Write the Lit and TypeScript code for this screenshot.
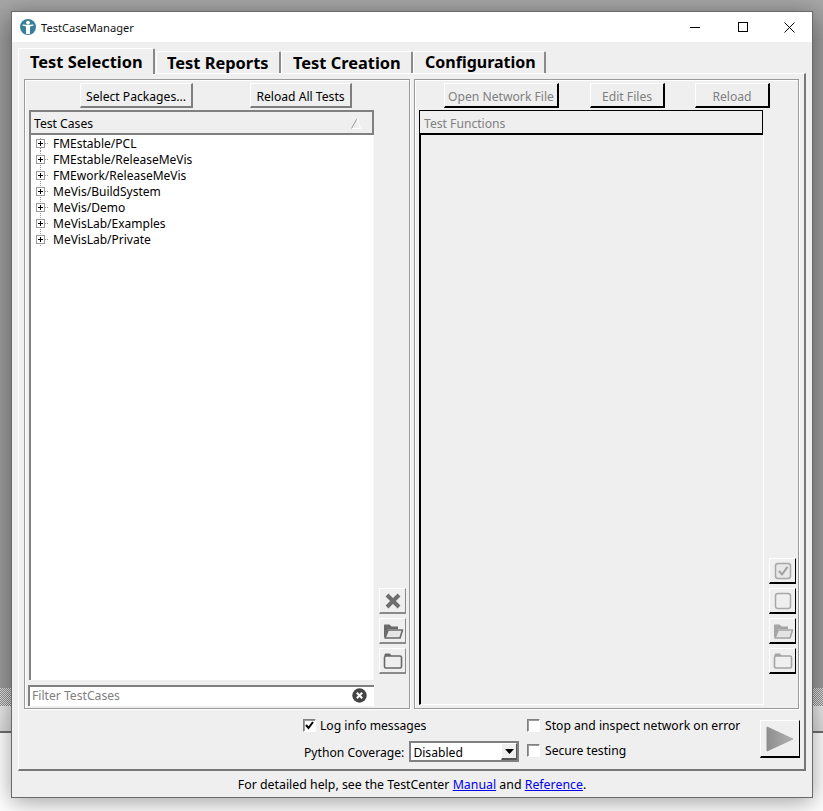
import { LitElement, html, css, svg } from "lit";
import { customElement } from "lit/decorators.js";

const packages = ["FMEstable/PCL","FMEstable/ReleaseMeVis","FMEwork/ReleaseMeVis","MeVis/BuildSystem","MeVis/Demo","MeVisLab/Examples","MeVisLab/Private"];

const folderOpen = (c: string, d: string) => html`<svg width="22" height="18" viewBox="0 0 22 18"><path d="M2 15V3.5C2 3 2.4 2.5 3 2.5H7.5L9.5 4.5H16V7H6L3.5 15Z" fill="${d}"/><path d="M3 16L6.2 8H20.5L18 16Z" fill="${c}" stroke="${d}" stroke-width="1.6" stroke-linejoin="round"/></svg>`;
const folderClosed = (c: string, d: string) => html`<svg width="20" height="18" viewBox="0 0 20 18"><path d="M1.5 4V3C1.5 2 2 1.5 3 1.5H7L8.5 4Z" fill="${d}"/><rect x="1.5" y="4" width="17" height="12" rx="1.5" fill="${c}" stroke="${d}" stroke-width="1.6"/></svg>`;

@customElement("app-root")
export class AppRoot extends LitElement {
  static styles = css`
    :host { display: block; position: relative; width: 823px; height: 811px; overflow: hidden; background: #fff; font-family: "Noto Sans", sans-serif; font-size: 12.15px; color: #000; }
    .desk { display: flex; flex-direction: column; height: 100%; }
    .d-gray { height: 688px; background: linear-gradient(#a6a6a6, #9a9a9a 40px); }
    .d-check { height: 18px; background: repeating-conic-gradient(#8f8f8f 0 25%, #e4e4e4 0 50%) 0 0 / 2px 2px; }
    .d-light { height: 25px; background: linear-gradient(#e9e9e9, #dcdcdc); }
    .d-line { height: 2px; background: #6e6e6e; }
    .window { position: absolute; left: 11px; top: 11px; width: 802px; height: 787px; box-sizing: border-box; border: 1px solid #6a6a6a; background: #efefef; box-shadow: 0 4px 22px rgba(0,0,0,.38); display: flex; flex-direction: column; }
    .title { height: 30px; flex: none; background: #fff; display: flex; align-items: center; padding-left: 8px; }
    .title svg.logo { flex: none; }
    .title .t { margin-left: 5px; font-size: 11.1px; color: #111; }
    .caps { margin-left: auto; display: flex; }
    .caps svg { display: block; width: 46px; height: 30px; }
    .body { flex: 1; padding: 0 6px; display: flex; flex-direction: column; }
    .tabs { height: 31px; flex: none; display: flex; align-items: flex-end; position: relative; z-index: 1; }
    .tab { box-sizing: border-box; height: 22px; border-left: 1px solid #fff; border-top: 1px solid #fff; border-right: 2px solid #8a8a8a; font-weight: 700; font-size: 16.4px; line-height: 21px; padding-left: 10px; border-top-left-radius: 2px; border-top-right-radius: 2px; white-space: nowrap; }
    .tab.sel { height: 26px; margin-bottom: -1px; background: #efefef; padding-left: 11px; line-height: 25px; }
    .tab.cr { padding-left: 11px; }
    .tab.cf { padding-left: 11px; font-size: 16px; }
    .frame { flex: none; box-sizing: border-box; height: 698px; width: 788px; border-top: 1px solid #fff; border-left: 1px solid #fff; border-right: 2px solid #777; border-bottom: 2px solid #777; padding: 5px 5px 0 5px; display: flex; flex-direction: column; }
    .groups { display: flex; gap: 4px; height: 630px; flex: none; }
    .group { box-sizing: border-box; border: 1px solid #9a9a9a; box-shadow: 1px 1px 0 #fff, inset 1px 1px 0 #fff; padding: 3px 0 0 4px; display: flex; flex-direction: column; }
    .group.l { width: 386px; }
    .group.r { width: 385px; }
    .btnrow { display: flex; height: 25px; flex: none; }
    .btn { box-sizing: border-box; height: 25px; padding-top: 2px; display: flex; align-items: center; justify-content: center; border-left: 1px solid #fff; border-top: 1px solid #fff; border-right: 2px solid #7e7e7e; border-bottom: 2px solid #7e7e7e; white-space: nowrap; }
    .off { color: #808080; border-right-color: #000; border-bottom-color: #000; }
    .w113 { width: 113px; margin-left: 51px; }
    .w102 { width: 102px; margin-left: 57px; }
    .w115 { width: 115px; margin-left: 25px; }
    .w75a { width: 75px; margin-left: 31px; }
    .w75b { width: 75px; margin-left: 30px; }
    .main { display: flex; gap: 5px; margin-top: 2px; flex: 1; min-height: 0; }
    .col { width: 345px; flex: none; display: flex; flex-direction: column; }
    .head { box-sizing: border-box; height: 25px; flex: none; display: flex; align-items: center; justify-content: space-between; border: 2px solid #808080; padding: 2px 11px 0 3px; }
    .r .head { border-color: #000; border-top-width: 1px; border-right-width: 1px; border-left-width: 1px; width: 344px; color: #808080; padding-left: 4px; }
    .tree { flex: none; height: 545px; box-sizing: border-box; background: #fff; border-left: 2px solid #808080; border-right: 1px solid #f8f8f8; font-size: 12px; }
    .row { height: 16px; display: flex; align-items: center; white-space: nowrap; }
    .row svg { flex: none; display: block; margin: 0 4px 0 4px; }
    .filter { box-sizing: border-box; margin: 5px 0 0 -1px; height: 21px; width: 346px; background: #fff; border-left: 2px solid #808080; border-top: 2px solid #808080; display: flex; align-items: center; justify-content: space-between; padding: 0 7px 2px 2px; color: #808080; }
    .filter svg { display: block; }
    .tree-r { flex: none; width: 345px; height: 570px; box-sizing: border-box; border-left: 2px solid #000; border-right: 1px solid #fff; border-bottom: 1px solid #fff; }
    .side { width: 27px; flex: none; display: flex; flex-direction: column; justify-content: flex-end; gap: 4px; padding-bottom: 34px; }
    .sbtn { box-sizing: border-box; width: 27px; height: 26px; display: flex; align-items: center; justify-content: center; border-left: 1px solid #fff; border-top: 1px solid #fff; border-right: 1px solid #8a8a8a; border-bottom: 2px solid #8a8a8a; }
    .sbtn.k { border-right-color: #000; border-bottom-color: #000; }
    .sbtn svg { display: block; }
    .bottom { flex: 1; display: grid; grid-template-columns: 224px 233px 40px; padding: 8px 0 0 279px; }
    .stack { display: flex; flex-direction: column; }
    .opt { display: flex; align-items: center; gap: 4px; height: 16px; white-space: nowrap; }
    .sr .opt { gap: 5px; }
    .box { box-sizing: border-box; width: 13px; height: 13px; background: #fff; border-left: 1px solid #808080; border-top: 1px solid #808080; border-right: 1px solid #fff; border-bottom: 1px solid #fff; box-shadow: inset 1px 1px 0 #9b9b9b; display: block; flex: none; }
    .opt svg { display: block; }
    .pyrow { display: flex; align-items: center; margin: 8px 0 0 1px; gap: 4px; white-space: nowrap; }
    .nudge { padding-top: 2px; }
    .combo { box-sizing: border-box; width: 110px; height: 21px; margin-left: 1px; background: #fff; border: 2px solid #808080; display: flex; align-items: center; justify-content: space-between; padding-left: 2px; }
    .arrow { box-sizing: border-box; width: 16px; height: 17px; background: #efefef; border-left: 1px solid #fff; border-top: 1px solid #fff; border-right: 1px solid #555; border-bottom: 2px solid #555; display: flex; align-items: center; justify-content: center; }
    .play { box-sizing: border-box; align-self: start; margin-top: 3px; width: 40px; height: 38px; border-left: 1px solid #fff; border-top: 1px solid #fff; border-right: 1px solid #000; border-bottom: 2px solid #000; display: flex; align-items: center; justify-content: center; }
    .play svg { display: block; }
    .stack.sr { gap: 9px; }
    .foot { height: 26px; flex: none; display: flex; align-items: center; justify-content: center; white-space: pre; font-size: 12.35px; }
    a { color: #0000ee; text-decoration: underline; }
  `;

  render() {
    const plus = (first: boolean) => svg`<svg width="14" height="16" viewBox="0 0 14 16"><path d="M5 ${first ? 3 : 0}V16M10 8H14" stroke="#999" stroke-dasharray="1 1" fill="none" shape-rendering="crispEdges"/><rect x="1.5" y="4.5" width="8" height="8" fill="#fff" stroke="#9a9a9a" shape-rendering="crispEdges"/><path d="M3 8.5H8M5.5 6V11" stroke="#000" shape-rendering="crispEdges"/></svg>`;
    return html`
      <div class="desk"><div class="d-gray"></div><div class="d-check"></div><div class="d-light"></div><div class="d-line"></div></div>
      <div class="window">
        <div class="title">
          <svg class="logo" width="16" height="16" viewBox="0 0 16 16"><circle cx="8" cy="8" r="8" fill="#3a7f99"/><circle cx="8" cy="3.6" r="1.9" fill="#fff"/><path d="M2.8 5.2C5 6 11 6 13.2 5.2L13.5 6.5L10 7.6V15H6V7.6L2.5 6.5Z" fill="#fff"/></svg>
          <span class="t">TestCaseManager</span>
          <div class="caps">
            <svg viewBox="0 0 46 30"><path d="M16 15.5H26" stroke="#000" shape-rendering="crispEdges"/></svg>
            <svg viewBox="0 0 46 30"><rect x="18.5" y="10.5" width="9" height="9" fill="none" stroke="#000" shape-rendering="crispEdges"/></svg>
            <svg viewBox="0 0 46 30"><path d="M18.5 10.5L28.5 20.5M28.5 10.5L18.5 20.5" stroke="#000" fill="none"/></svg>
          </div>
        </div>
        <div class="body">
          <div class="tabs">
            <div class="tab sel" style="width:137px">Test Selection</div>
            <div class="tab" style="width:125px;margin-left:1px">Test Reports</div>
            <div class="tab cr" style="width:132px">Test Creation</div>
            <div class="tab cf" style="width:133px">Configuration</div>
          </div>
          <div class="frame">
            <div class="groups">
              <div class="group l">
                <div class="btnrow"><div class="btn w113">Select Packages...</div><div class="btn w102">Reload All Tests</div></div>
                <div class="main">
                  <div class="col">
                    <div class="head"><span>Test Cases</span>
                      <svg width="10" height="11" viewBox="0 0 10 11"><path d="M.5 10.5H9.5" stroke="#fff"/><path d="M.5 10.5L6 .5" stroke="#9a9a9a" fill="none"/><path d="M6 .5L9.5 10.5" stroke="#fff" fill="none"/></svg>
                    </div>
                    <div class="tree">
                      ${packages.map((p, i) => html`<div class="row">${plus(i === 0)}<span>${p}</span></div>`)}
                    </div>
                    <div class="filter"><span>Filter TestCases</span>
                      <svg width="15" height="15" viewBox="0 0 15 15"><circle cx="7.5" cy="7.5" r="7.2" fill="#444"/><path d="M4.8 4.8L10.2 10.2M10.2 4.8L4.8 10.2" stroke="#fff" stroke-width="2"/></svg>
                    </div>
                  </div>
                  <div class="side">
                    <div class="sbtn"><svg width="18" height="18" viewBox="0 0 18 18"><path d="M3 3L15 15M15 3L3 15" stroke="#6e6e6e" stroke-width="4"/></svg></div>
                    <div class="sbtn">${folderOpen("#e6e6e6", "#6a6a6a")}</div>
                    <div class="sbtn">${folderClosed("#efefef", "#6a6a6a")}</div>
                  </div>
                </div>
              </div>
              <div class="group r">
                <div class="btnrow"><div class="btn off w115">Open Network File</div><div class="btn off w75a">Edit Files</div><div class="btn off w75b">Reload</div></div>
                <div class="main">
                  <div class="col">
                    <div class="head">Test Functions</div>
                    <div class="tree-r"></div>
                  </div>
                  <div class="side">
                    <div class="sbtn k"><svg width="18" height="18" viewBox="0 0 18 18"><rect x="1.5" y="1.5" width="15" height="15" rx="2.5" fill="#e8e8e8" stroke="#a8a8a8" stroke-width="1.5"/><path d="M5 9L8 12.5L13.5 4.8" fill="none" stroke="#a0a0a0" stroke-width="2"/></svg></div>
                    <div class="sbtn k"><svg width="18" height="18" viewBox="0 0 18 18"><rect x="1.5" y="1.5" width="15" height="15" rx="2.5" fill="#efefef" stroke="#a8a8a8" stroke-width="1.5"/></svg></div>
                    <div class="sbtn k">${folderOpen("#e4e4e4", "#a4a4a4")}</div>
                    <div class="sbtn k">${folderClosed("#efefef", "#a4a4a4")}</div>
                  </div>
                </div>
              </div>
            </div>
            <div class="bottom">
              <div class="stack">
                <div class="opt"><span class="box"><svg width="11" height="11" viewBox="0 0 11 11"><path d="M2 5L4.5 8L9 2" fill="none" stroke="#000" stroke-width="2"/></svg></span><span>Log info messages</span></div>
                <div class="pyrow"><span class="nudge">Python Coverage:</span><div class="combo"><span class="nudge">Disabled</span><div class="arrow"><svg width="9" height="5" viewBox="0 0 9 5"><path d="M0 0H9L4.5 5Z" fill="#000"/></svg></div></div></div>
              </div>
              <div class="stack sr">
                <div class="opt"><span class="box"></span><span>Stop and inspect network on error</span></div>
                <div class="opt"><span class="box"></span><span>Secure testing</span></div>
              </div>
              <div class="play"><svg width="28" height="26" viewBox="0 0 28 26"><defs><linearGradient id="pg" x1="0" x2="1"><stop offset="0" stop-color="#8e8e8e"/><stop offset="1" stop-color="#b0b0b0"/></linearGradient></defs><path d="M1 1L27 13L1 25Z" fill="url(#pg)" stroke="url(#pg)" stroke-linejoin="round"/></svg></div>
            </div>
          </div>
          <div class="foot">For detailed help, see the TestCenter <a>Manual</a> and <a>Reference</a>.</div>
        </div>
      </div>`;
  }
}
